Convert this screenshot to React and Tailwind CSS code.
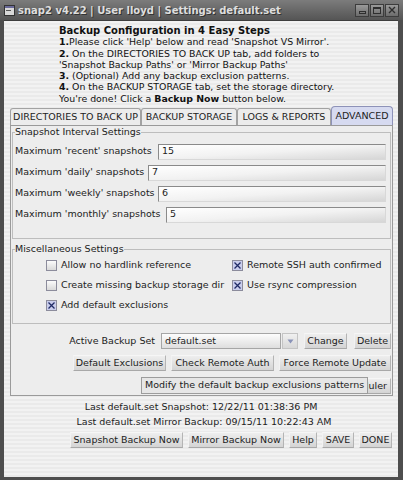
import React from 'react';

const font = "font-['DejaVu_Sans','Liberation_Sans',sans-serif]";

function Btn({ children, className = '' }) {
	return (
		<div
			className={`h-[16px] flex items-center justify-center px-[3px] bg-gradient-to-b from-[#eeeeee] to-[#d4d4d4] border border-t-[#f6f6f6] border-l-[#f2f2f2] border-r-[#b4b4b4] border-b-[#a8a8a8] text-[9.5px] text-[#222] whitespace-nowrap ${className}`}>
			{children}
		</div>
	);
}

function Field({ label, value, left }) {
	return (
		<div className="h-[21px] flex items-center pl-[2px] pr-[4px]">
			<span className="text-[9.5px] text-[#222] whitespace-nowrap" style={{ width: left - 15 }}>
				{label}
			</span>
			<div className="flex-1 h-[16px] flex items-center pl-[3px] border border-t-[#8a8a8a] border-l-[#8a8a8a] border-r-[#d8d8d8] border-b-[#d8d8d8] bg-gradient-to-br from-[#ffffff] via-[#f2f2f2] to-[#d6d6d6] text-[9.5px] text-[#222]">
				{value}
			</div>
		</div>
	);
}

function Check({ checked, label }) {
	return (
		<div className="h-[20px] flex items-center gap-[4px]">
			<div
				className={`w-[11px] h-[11px] border border-[#8c8c9c] flex items-center justify-center ${
					checked ? 'bg-[#c9cdec]' : 'bg-gradient-to-b from-[#fbfbfb] to-[#d9d9d9]'
				}`}>
				{checked && (
					<svg width="9" height="9" viewBox="0 0 9 9">
						<path d="M1.5 1.5L7.5 7.5M7.5 1.5L1.5 7.5" stroke="#1f2a66" strokeWidth="1.3" />
					</svg>
				)}
			</div>
			<span className="text-[9.5px] text-[#222] whitespace-nowrap">{label}</span>
		</div>
	);
}

export default function App() {
	const tabs = [
		{ name: 'DIRECTORIES TO BACK UP', w: 131 },
		{ name: 'BACKUP STORAGE', w: 96 },
		{ name: 'LOGS & REPORTS', w: 94 },
	];

	return (
		<div className={`w-[403px] h-[480px] flex flex-col bg-[#4e4e4e] ${font}`}>
			{/* Title bar */}
			<div className="h-[20px] flex items-center bg-gradient-to-b from-[#7c7c7c] to-[#555555] px-[4px]">
				<svg width="11" height="11" viewBox="0 0 11 11" className="mr-[3px]">
					<rect x="0.5" y="0.5" width="10" height="10" fill="#d8d8d8" stroke="#333" />
					<rect x="1" y="1" width="9" height="2" fill="#6a6a9a" />
					<rect x="2" y="5" width="5" height="1" fill="#555" />
				</svg>
				<span className="text-[10px] font-bold text-[#dedede] whitespace-nowrap [text-shadow:1px_1px_0_#333]">
					snap2 v4.22 | User lloyd | Settings: default.set
				</span>
				<div className="ml-auto flex gap-[1px]">
					{['min', 'max', 'close'].map((k) => (
						<div
							key={k}
							className="w-[14px] h-[13px] border border-[#3c3c3c] bg-gradient-to-b from-[#9a9a9a] to-[#6c6c6c] flex items-center justify-center">
							{k === 'min' && <div className="w-[7px] h-[3px] border border-[#2e2e2e] mt-[4px]" />}
							{k === 'max' && <div className="w-[8px] h-[7px] border border-[#2e2e2e] border-t-2" />}
							{k === 'close' && (
								<svg width="8" height="8" viewBox="0 0 8 8">
									<path d="M1 1L7 7M7 1L1 7" stroke="#2e2e2e" strokeWidth="1.4" />
								</svg>
							)}
						</div>
					))}
				</div>
			</div>

			{/* Content */}
			<div className="flex-1 mx-[4px] mb-[3px] mr-[5px] flex flex-col bg-[repeating-linear-gradient(0deg,#eaeaea_0px,#eaeaea_2px,#f2f2f2_2px,#f2f2f2_4px)] border-t border-[#3e3e3e]">
				{/* Instructions */}
				<div className="pl-[55px] pt-[4px] text-[9.4px] leading-[11.3px] text-[#111]">
					<div className="font-bold text-[10px]">Backup Configuration in 4 Easy Steps</div>
					<div>
						<b>1.</b>Please click 'Help' below and read 'Snapshot VS Mirror'.
					</div>
					<div>
						<b>2.</b> On the DIRECTORIES TO BACK UP tab, add folders to
					</div>
					<div>'Snapshot Backup Paths' or 'Mirror Backup Paths'</div>
					<div>
						<b>3.</b> (Optional) Add any backup exclusion patterns.
					</div>
					<div>
						<b>4.</b> On the BACKUP STORAGE tab, set the storage directory.
					</div>
					<div>
						You're done! Click a <b>Backup Now</b> button below.
					</div>
				</div>

				{/* Tabs */}
				<div className="mt-[2px] ml-[6px] mr-[5px] flex items-end h-[19px]">
					{tabs.map((t) => (
						<div
							key={t.name}
							style={{ width: t.w }}
							className="h-[17px] flex items-center justify-center border border-b-0 border-[#a2a2a2] rounded-t-[3px] bg-[#ececec] text-[9.5px] text-[#222] whitespace-nowrap">
							{t.name}
						</div>
					))}
					<div className="flex-1 h-[19px] flex items-center justify-center border border-b-0 border-[#8d92b8] rounded-t-[4px] bg-[#d6daf0] text-[9.5px] text-[#222] whitespace-nowrap">
						ADVANCED
					</div>
				</div>

				{/* Tab panel */}
				<div className="ml-[6px] mr-[5px] h-[271px] border border-[#9a9a9a] bg-[#ededed] flex flex-col">
					<fieldset className="mx-[1px] border border-[#bdbdbd] pb-[13px] min-w-0">
						<legend className="ml-[2px] text-[9.5px] text-[#222] leading-[12px]">Snapshot Interval Settings</legend>
						<div className="pt-[3px]">
							<Field label="Maximum 'recent' snapshots" value="15" left={158} />
							<Field label="Maximum 'daily' snapshots" value="7" left={148} />
							<Field label="Maximum 'weekly' snapshots" value="6" left={158} />
							<Field label="Maximum 'monthly' snapshots" value="5" left={166} />
						</div>
					</fieldset>

					<fieldset className="mx-[1px] mt-[4px] h-[81px] border border-[#bdbdbd] min-w-0">
						<legend className="ml-[2px] text-[9.5px] text-[#222] leading-[12px]">Miscellaneous Settings</legend>
						<div className="flex pl-[33px]">
							<div className="w-[186px] flex flex-col">
								<Check label="Allow no hardlink reference" />
								<Check label="Create missing backup storage dir" />
								<Check checked label="Add default exclusions" />
							</div>
							<div className="flex flex-col">
								<Check checked label="Remote SSH auth confirmed" />
								<Check checked label="Use rsync compression" />
							</div>
						</div>
					</fieldset>

					{/* Backup set controls */}
					<div className="flex items-center justify-end gap-[5px] pr-[1px] mt-[9px] h-[16px]">
						<span className="text-[9.5px] text-[#222] mr-[1px]">Active Backup Set</span>
						<div className="flex items-center h-[16px]">
							<div className="w-[120px] h-[16px] flex items-center pl-[3px] border border-[#a6a6a6] bg-gradient-to-b from-[#fdfdfd] to-[#dedede] text-[9.5px] text-[#222]">
								default.set
							</div>
							<div className="w-[16px] h-[16px] ml-[1px] flex items-center justify-center bg-gradient-to-b from-[#f0f0f0] to-[#d8d8d8] border border-[#c4c4c4]">
								<svg width="7" height="5" viewBox="0 0 7 5">
									<path d="M0.5 0.5H6.5L3.5 4.5Z" fill="#8a93b8" />
								</svg>
							</div>
						</div>
						<Btn className="w-[43px] ml-[1px]">Change</Btn>
						<Btn className="w-[37px] ml-[2px]">Delete</Btn>
					</div>

					<div className="flex items-center justify-end gap-[5px] pr-[1px] mt-[6px]">
						<Btn className="w-[93px]">Default Exclusions</Btn>
						<Btn className="w-[103px]">Check Remote Auth</Btn>
						<Btn className="w-[112px]">Force Remote Update</Btn>
					</div>

					<div className="relative flex items-center justify-end pr-[1px] mt-[7px]">
						<Btn className="w-[112px] justify-end">Scheduler</Btn>
						<div className="absolute left-[130px] top-[-1px] h-[17px] px-[3px] flex items-center bg-[#e6e6e6] border border-[#9c9c9c] text-[9.5px] text-[#222] whitespace-nowrap">
							Modify the default backup exclusions patterns
						</div>
					</div>
				</div>

				{/* Status */}
				<div className="mt-[3px] flex flex-col items-center text-[9.5px] text-[#222] leading-[15px] pl-[6px]">
					<div className="mr-[6px]">Last default.set Snapshot: 12/22/11 01:38:36 PM</div>
					<div>Last default.set Mirror Backup: 09/15/11 10:22:43 AM</div>
				</div>

				<div className="flex items-center justify-end gap-[5px] mt-[3px] mr-[6px]">
					<Btn className="w-[113px]">Snapshot Backup Now</Btn>
					<Btn className="w-[96px]">Mirror Backup Now</Btn>
					<Btn className="w-[28px]">Help</Btn>
					<Btn className="w-[32px]">SAVE</Btn>
					<Btn className="w-[33px]">DONE</Btn>
				</div>
			</div>
		</div>
	);
}
